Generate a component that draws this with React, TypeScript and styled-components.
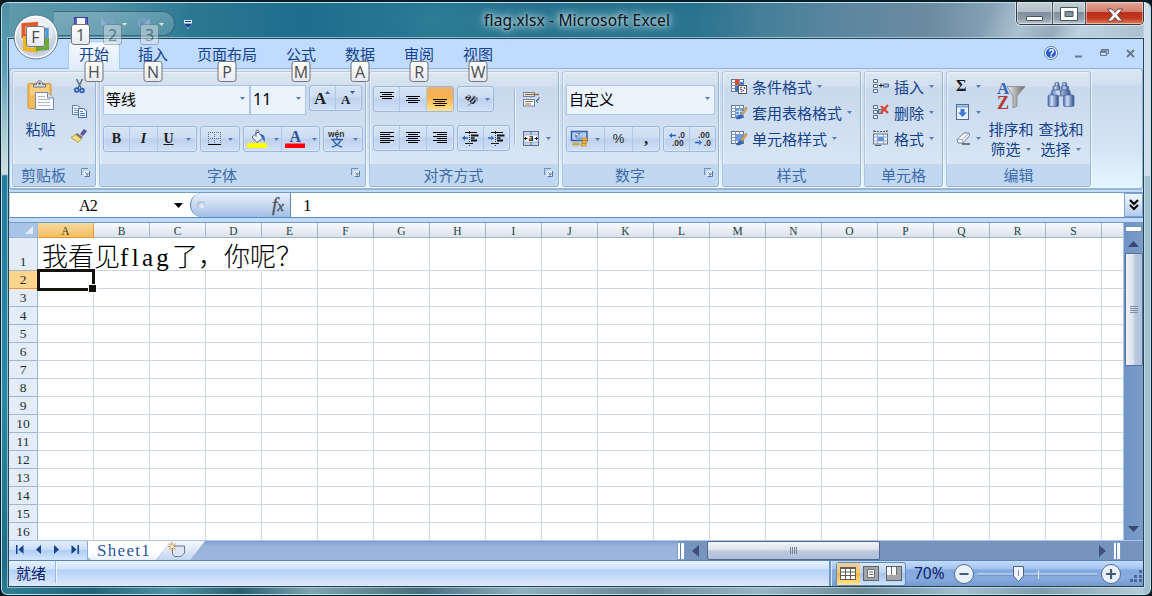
import React from "react";
import styled, { createGlobalStyle, css } from "styled-components";

const Global = createGlobalStyle`
  * { box-sizing: border-box; }
  html, body { margin: 0; padding: 0; overflow: hidden; background: #07191f; }
  body { font-family: "Noto Sans CJK SC", sans-serif; font-size: 15px; color: #15428b; }
  svg { display: block; flex: none; overflow: visible; }
`;

const Window = styled.div`
  width: 1152px;
  height: 596px;
  position: relative;
  display: flex;
  flex-direction: column;
  border-radius: 8px 8px 7px 7px;
  overflow: hidden;
  border: 1px solid #0c1d25;
  border-top-width: 2px;
  padding: 0 7px 8px 7px;
  box-shadow: inset 0 0 0 1px #b5e2ee;
  background:
    linear-gradient(90deg, transparent 1142px, rgba(212, 226, 235, 0.9) 1143px) 0 0 / 100% 174px no-repeat,
    linear-gradient(90deg, transparent 1142px, #a3c0d0 1143px) 0 0 / 100% 100% no-repeat,
    linear-gradient(180deg, #4c8fa4 0, #5f9fba 70px, #a9c9d0 130px, #d3dedf 172px, #257c9c 174px, #2b87a3 400px, #1f6d86 560px, #2d7d92 596px) 0 0 / 8px 100% no-repeat,
    linear-gradient(90deg, #2f7f95 0, #1f6379 90px, #4f94a6 170px, #2b5f70 240px, #7fa5b0 310px, #476d7c 420px, #8fb0c0 520px, #6c8695 640px, #9ab6c4 760px, #6b8895 860px, #a5bfcf 960px, #809cab 1040px, #b5cbd9 1140px) 0 100% / 100% 9px no-repeat,
    linear-gradient(115deg, transparent 900px, rgba(183, 205, 219, 0.65) 935px, rgba(120, 145, 160, 0.3) 965px, rgba(197, 219, 234, 0.7) 990px, rgba(160, 180, 195, 0.5) 1040px),
    radial-gradient(ellipse 180px 30px at 560px 20px, rgba(80, 150, 170, 0.4), transparent),
    linear-gradient(90deg, #5f9aab 0, #4f91a6 100px, #2c7893 190px, #1e6d8d 300px, #287995 430px, #1c6787 540px, #25708d 690px, #457f98 760px, #5b86a0 840px, #6c8ba1 930px, #8fa9bc 1010px, #b4c7d5 1100px, #c3d3dd 1152px);
`;

const TitleBar = styled.header`
  height: 36px;
  flex: none;
  position: relative;
  display: flex;
  justify-content: space-between;
  align-items: flex-start;
`;

const QuickAccess = styled.div`
  position: absolute;
  left: 46px;
  top: 9px;
  width: 121px;
  height: 25px;
  border: 1px solid rgba(45, 85, 100, 0.75);
  border-left: none;
  border-radius: 0 13px 13px 0;
  background: linear-gradient(rgba(255, 255, 255, 0.22), rgba(255, 255, 255, 0.14));
`;

const QuickIcon = styled.div<{ $x: number; $y: number; $dim?: boolean }>`
  position: absolute;
  left: ${(p) => p.$x}px;
  top: ${(p) => p.$y}px;
  opacity: ${(p) => (p.$dim ? 0.85 : 1)};
`;

const tip = css`
  display: flex;
  align-items: center;
  justify-content: center;
  height: 21px;
  min-width: 19px;
  border: 1px solid #767676;
  border-radius: 3px;
  background: linear-gradient(#ffffff, #e6e9f2);
  color: #4c4c4c;
  font: 16px/18px "Open Sans", sans-serif;
  z-index: 5;
`;

const FloatingTip = styled.span<{ $x: number; $y: number; $faded?: boolean }>`
  ${tip}
  position: absolute;
  left: ${(p) => p.$x}px;
  top: ${(p) => p.$y}px;
  ${(p) => p.$faded && css`opacity: 0.5; background: #d9e5ea;`}
`;

const Title = styled.h1`
  position: absolute;
  left: 476px;
  top: 7px;
  margin: 0;
  font: 400 15.5px/22px "Noto Sans", sans-serif;
  letter-spacing: 0.15px;
  white-space: nowrap;
  color: #0b1418;
  text-shadow: 0 0 5px rgba(225, 245, 250, 0.9), 0 0 9px rgba(215, 240, 247, 0.8), 0 0 13px rgba(200, 230, 240, 0.7);
`;

const WindowButtons = styled.div`
  display: flex;
  margin-left: auto;
  height: 23px;
  border: 1px solid #303a42;
  border-top: none;
  border-radius: 0 0 5px 5px;
  overflow: hidden;
  box-shadow: 0 0 0 1px rgba(255, 255, 255, 0.55);
`;

const WindowButton = styled.div<{ $w: number; $close?: boolean; $drop?: number }>`
  width: ${(p) => p.$w}px;
  display: flex;
  align-items: center;
  justify-content: center;
  padding-top: ${(p) => p.$drop ?? 1}px;
  box-shadow: inset 0 0 0 1px rgba(255, 255, 255, 0.45);
  border-left: ${(p) => (p.$w === 35 ? "none" : "1px solid #46525c")};
  background: ${(p) =>
    p.$close
      ? "linear-gradient(#e3a795 0, #d27e6c 45%, #b72d17 48%, #c43a20 75%, #e08060)"
      : "linear-gradient(#c6cfd8 0, #b3bec8 45%, #7f8d9b 48%, #8e9daa 75%, #b9c7d2)"};
`;

const Client = styled.main`
  flex: 1;
  min-height: 0;
  display: flex;
  flex-direction: column;
  border: 1px solid #26444f;
  box-shadow: 0 0 0 1px rgba(200, 235, 245, 0.6);
  background: #bfdbff;
`;

const Tabs = styled.nav`
  height: 29px;
  flex: none;
  display: flex;
  padding: 2px 0 0 59px;
  gap: 7px;
  position: relative;
`;

const Tab = styled.div<{ $active?: boolean }>`
  position: relative;
  padding: 0 11px;
  height: 28px;
  line-height: 25px;
  color: #15428b;
  white-space: nowrap;
  ${(p) =>
    p.$active &&
    css`
      z-index: 2;
      border: 1px solid #a9cdf0;
      border-bottom: none;
      padding: 0 10px;
      line-height: 23px;
      border-radius: 4px 4px 0 0;
      background: linear-gradient(#f5faff, #e1ebf8);
      box-shadow: inset 0 0 2px 1px #d8f4ff;
    `}
`;

const TabTip = styled.span<{ $inset?: boolean }>`
  ${tip}
  position: absolute;
  left: 50%;
  top: ${(p) => (p.$inset ? 19 : 20)}px;
  transform: translateX(-50%);
`;

const DocButtons = styled.div`
  position: absolute;
  right: 8px;
  top: 7px;
  display: flex;
  align-items: center;
  gap: 17px;
`;

const Ribbon = styled.section`
  height: 122px;
  flex: none;
  display: flex;
  gap: 3px;
  padding: 2px 2px;
  border: 1px solid #8db2e3;
  border-bottom: 2px solid #9ab6cf;
  border-radius: 4px;
  background: linear-gradient(#dde7f4 0, #d1dff0 15px, #c7d8ed 17px, #d5e4f3 80px, #e4f6ff 118px);
`;

const Group = styled.div<{ $w: number }>`
  width: ${(p) => p.$w}px;
  height: 116px;
  flex: none;
  border: 1px solid;
  border-color: #b9cbdf #96b7d3 #8fb3cf #b0c6dd;
  border-radius: 3px;
  display: flex;
  flex-direction: column;
  box-shadow: inset 1px 1px 0 rgba(255, 255, 255, 0.45), 1px 1px 0 rgba(255, 255, 255, 0.6);
  background: linear-gradient(#dde7f3 0, #d3dfee 14px, #c8d8ed 16px, #d8e6f4 92px);
`;

const GroupBody = styled.div<{ $pad: string; $gap?: number; $row?: boolean }>`
  height: 92px;
  padding: ${(p) => p.$pad};
  display: flex;
  flex-direction: ${(p) => (p.$row ? "row" : "column")};
  gap: ${(p) => p.$gap ?? 0}px;
`;

const GroupLabel = styled.div<{ $launch?: boolean }>`
  flex: 1;
  display: flex;
  align-items: center;
  justify-content: center;
  position: relative;
  line-height: 20px;
  color: #3e6aaa;
  padding-right: ${(p) => (p.$launch ? 21 : 0)}px;
  background: linear-gradient(#c1d8f0, #c0d8ef);
  border-radius: 0 0 2px 2px;
  white-space: nowrap;
`;

const LauncherSlot = styled.span`
  position: absolute;
  right: 5px;
  top: 4px;
`;

const Line = styled.div<{ $h?: number; $gap?: number }>`
  display: flex;
  align-items: flex-start;
  height: ${(p) => p.$h ?? 26}px;
  gap: ${(p) => p.$gap ?? 3}px;
`;

const Combo = styled.div<{ $w: number }>`
  width: ${(p) => p.$w}px;
  height: 30px;
  border: 1px solid #aec6e6;
  background: #eaf2fb;
  color: #000;
  padding: 0 4px 3px 2px;
  display: flex;
  align-items: center;
  justify-content: space-between;
  line-height: 24px;
`;

const Latin = styled.span`
  font: 16px/24px "Noto Sans", sans-serif;
`;

const ButtonSet = styled.div`
  display: flex;
  height: 26px;
  border: 1px solid #9ab8df;
  border-radius: 3px;
  background: linear-gradient(#d6e4f5 0, #ccdcf2 45%, #bed1ed 50%, #cfe0f6 100%);
  box-shadow: inset 0 0 0 1px rgba(255, 255, 255, 0.25);
`;

const ToolButton = styled.div<{ $w: number; $on?: boolean; $sep?: boolean }>`
  width: ${(p) => p.$w}px;
  height: 24px;
  display: flex;
  align-items: center;
  justify-content: center;
  gap: 7px;
  border-right: ${(p) => (p.$sep ? "1px solid #b0c8e8" : "none")};
  ${(p) => p.$on && css`background: linear-gradient(#edb16e 0, #fdb14d 40%, #ffb94e 50%, #ffe596 100%); border-radius: 2px;`}
`;

const Glyph = styled.span<{ $italic?: boolean; $under?: boolean; $size?: number }>`
  font: ${(p) => (p.$italic ? "italic " : "")}700 ${(p) => p.$size ?? 14}px/20px "Liberation Serif", serif;
  text-decoration: ${(p) => (p.$under ? "underline" : "none")};
  color: #1c1c1c;
`;

const Percent = styled.span`
  font: 400 13px/20px "Liberation Sans", sans-serif;
  color: #222;
`;

const VLine = styled.i<{ $h: number }>`
  width: 2px;
  height: ${(p) => p.$h}px;
  border-left: 1px solid #9ab8df;
  border-right: 1px solid #eef5fd;
`;

const AlignSide = styled.div`
  display: flex;
  flex-direction: column;
  gap: 24px;
  padding: 6px 0 0 7px;
`;

const SideRule = styled.div`
  padding: 3px 0 0 4px;
`;

const Columns = styled.div`
  display: flex;
`;

const Stack = styled.div<{ $gap: number }>`
  display: flex;
  flex-direction: column;
  gap: ${(p) => p.$gap}px;
`;

const SizeButtons = styled.div`
  margin-left: 3px;
`;

const WithArrow = styled.div<{ $gap?: number }>`
  display: flex;
  align-items: center;
  gap: ${(p) => p.$gap ?? 6}px;
`;

const MenuItem = styled.div`
  height: 26px;
  display: flex;
  align-items: center;
  gap: 5px;
  white-space: nowrap;
`;

const BigButton = styled.div<{ $w: number; $top: number }>`
  width: ${(p) => p.$w}px;
  padding-top: ${(p) => p.$top}px;
  display: flex;
  flex-direction: column;
  align-items: center;
  line-height: 20px;
  white-space: nowrap;
`;

const BigLabel = styled.div<{ $top: number }>`
  margin-top: ${(p) => p.$top}px;
  display: flex;
  flex-direction: column;
  align-items: center;
`;

const SmallIcons = styled.div<{ $pad: string; $gap: number }>`
  padding: ${(p) => p.$pad};
  display: flex;
  flex-direction: column;
  align-items: center;
  gap: ${(p) => p.$gap}px;
`;

const FormulaBar = styled.div`
  margin-top: 2px;
  height: 26px;
  flex: none;
  display: flex;
  border-top: 1px solid #6f9cc5;
  border-bottom: 1px solid #5f8dbb;
  border-left: 1px solid #b6cce8;
  background: #fff;
  font: 16px/25px "Liberation Serif", serif;
  color: #000;
`;

const NameBox = styled.div`
  width: 180px;
  padding: 0 7px 0 69px;
  display: flex;
  align-items: center;
  justify-content: space-between;
  font-size: 16px;
  letter-spacing: -0.8px;
`;

const FxPill = styled.div`
  width: 101px;
  display: flex;
  align-items: center;
  justify-content: space-between;
  padding: 0 6px 0 6px;
  border-left: 1px solid #5b87bb;
  border-right: 1px solid #5b87bb;
  border-radius: 12px 0 0 12px;
  background: linear-gradient(#e8f0fb 0, #c7d9f0 50%, #a2bee6 100%);
`;

const Knob = styled.i`
  width: 8px;
  height: 8px;
  border-radius: 50%;
  background: radial-gradient(circle at 60% 65%, #eef4fc, #93a9c9);
`;

const Fx = styled.span`
  font: italic 400 19px/22px "Liberation Serif", serif;
  color: #4d5561;
  -webkit-text-stroke: 0.4px #4d5561;
  small { font-size: 15px; }
`;

const FormulaInput = styled.div`
  flex: 1;
  padding-left: 12px;
  font-size: 17px;
`;

const Expand = styled.div`
  width: 19px;
  border: 1px solid #7ea3d0;
  background: linear-gradient(#f1f6fd, #b4cbec);
  display: flex;
  align-items: center;
  justify-content: center;
`;

const Sheet = styled.div`
  margin-top: 4px;
  height: 318px;
  flex: none;
  display: flex;
  border-top: 1px solid #7798bf;
`;

const Grid = styled.div`
  width: 1114px;
  overflow: hidden;
  position: relative;
  background: #fff;
`;

const GridRow = styled.div<{ $h: number }>`
  display: flex;
  height: ${(p) => p.$h}px;
`;

const ColHead = styled.div<{ $on?: boolean }>`
  width: 56px;
  flex: none;
  border-right: 1px solid #9eb6ce;
  border-bottom: 1px solid #9eb6ce;
  background: linear-gradient(#f8fafd, #dbe2ec);
  color: #223d3d;
  font: 11.5px/16px "Liberation Serif", serif;
  text-align: center;
  ${(p) => p.$on && css`background: linear-gradient(#f9d99f, #f0bf62); border-color: #f29536; color: #3c3520;`}
`;

const Corner = styled.div`
  width: 29px;
  flex: none;
  border-right: 1px solid #9eb6ce;
  border-bottom: 1px solid #9eb6ce;
  background: #a9c4e9;
  display: flex;
  align-items: flex-end;
  justify-content: flex-end;
  padding: 0 4px 3px 0;
`;

const RowHead = styled.div<{ $on?: boolean }>`
  width: 29px;
  flex: none;
  border-right: 1px solid #9eb6ce;
  border-bottom: 1px solid #9eb6ce;
  background: #e4ecf7;
  display: flex;
  align-items: flex-end;
  justify-content: center;
  color: #1c2f33;
  font: 13.5px/16px "Liberation Serif", serif;
  ${(p) => p.$on && css`background: #ffd58d; border-color: #f29536;`}
`;

const Cell = styled.div`
  width: 56px;
  flex: none;
  border-right: 1px solid #d0d7e5;
  border-bottom: 1px solid #d0d7e5;
  white-space: nowrap;
`;

const WideCell = styled.div`
  width: 280px;
  flex: none;
  border-right: 1px solid #d0d7e5;
  border-bottom: 1px solid #d0d7e5;
  padding-left: 4px;
  color: #000;
  font: 300 26px/34px "Noto Sans CJK SC", sans-serif;
  white-space: nowrap;
`;

const SerifRun = styled.span`
  font-family: "Liberation Serif", serif;
  font-size: 25px;
  letter-spacing: 3.3px;
`;

const Selection = styled.div`
  position: absolute;
  left: 28px;
  top: 46px;
  width: 58px;
  height: 22px;
  border: 3px solid #15110d;
  &::after {
    content: "";
    position: absolute;
    right: -5px;
    bottom: -5px;
    width: 7px;
    height: 7px;
    background: #15110d;
    border: 1px solid #fff;
  }
`;

const VScroll = styled.div`
  flex: 1;
  display: flex;
  flex-direction: column;
  align-items: center;
  border-left: 1px solid #a9c5ee;
  background: linear-gradient(90deg, #6f93c4, #7c9bc7);
`;

const SplitHandle = styled.div`
  width: 17px;
  height: 6px;
  margin-top: 3px;
  background: #fff;
  border: 1px solid #6d8fb8;
`;

const ScrollArrow = styled.div<{ $top: number }>`
  margin-top: ${(p) => p.$top}px;
`;

const VThumb = styled.div`
  width: 18px;
  height: 113px;
  margin-top: 6px;
  border: 1px solid #55709a;
  border-radius: 1px;
  background: linear-gradient(90deg, #f1f4f9, #dbe2ec 45%, #bccadd 55%, #adc0da);
  display: flex;
  align-items: center;
  justify-content: center;
`;

const SheetBar = styled.div`
  height: 20px;
  flex: none;
  display: flex;
  background: linear-gradient(#7f9fcf, #9bb4dc 30%, #9db6dd);
  border-top: 1px solid #a9c5ee;
`;

const SheetNav = styled.div`
  width: 79px;
  display: flex;
  align-items: center;
  justify-content: space-between;
  padding: 0 8px 2px 7px;
  background: linear-gradient(#e3eefc 0, #c9defa 45%, #afcdf5 50%, #d2e5fd);
  border-right: 1px solid #8badd8;
`;

const SheetTab = styled.div`
  width: 83px;
  padding-left: 9px;
  background: linear-gradient(#ffffff 60%, #e8eefc);
  clip-path: polygon(0 0, 100% 0, 68px 100%, 3px 100%, 0 85%);
  color: #2a569d;
  font: 17px/20px "Liberation Serif", serif;
  letter-spacing: 1.3px;
`;

const NewSheet = styled.div`
  width: 48px;
  margin-left: -14px;
  background: linear-gradient(#f4f8fe, #c4d6ef);
  clip-path: polygon(14px 0, 100% 0, 33px 100%, 0 100%);
  padding: 1px 0 0 11px;
`;

const HScroll = styled.div`
  margin-left: auto;
  width: 466px;
  display: flex;
  align-items: center;
  background: #7794be;
`;

const SplitBox = styled.div`
  width: 8px;
  height: 18px;
  background: linear-gradient(90deg, #ffffff 2px, #5b82b5 2px, #5b82b5 3px, #ffffff 3px);
  border: 1px solid #7a9cc8;
`;

const ArrowGap = styled.div`
  margin-left: 7px;
`;

const HThumb = styled.div`
  width: 173px;
  height: 19px;
  margin: 0 219px 0 8px;
  border: 1px solid #4f6990;
  border-radius: 2px;
  background: linear-gradient(#f2f4f8, #dde3ec 45%, #bccadd 52%, #acc0db);
  display: flex;
  align-items: center;
  justify-content: center;
`;

const StatusBar = styled.footer`
  flex: 1;
  display: flex;
  border-top: 1px solid #5b82b5;
  background: linear-gradient(#e6f1fe 0, #cfe2fc 32%, #b3d0f7 36%, #c4daf9 60%, #dde9fb 100%);
`;

const StatusText = styled.div`
  width: 46px;
  padding-left: 7px;
  line-height: 23px;
  color: #10246b;
  white-space: nowrap;
`;

const StatusRight = styled.div`
  margin-left: auto;
  width: 314px;
  display: flex;
  align-items: center;
  border-left: 2px solid #6f97cf;
  box-shadow: inset 1px 0 0 #d9e9ff;
  background: linear-gradient(#c5dcfa 0, #a5c5f0 30%, #84aae0 36%, #87abdf 70%, #7499cd 100%);
  padding-left: 5px;
`;

const Views = styled.div`
  width: 70px;
  height: 24px;
  display: flex;
  border: 1px solid #6189c2;
  border-radius: 3px;
  background: linear-gradient(#dae8fb, #b9d2f3 45%, #a2c1ec 50%, #cfe3fc);
`;

const View = styled.div<{ $on?: boolean }>`
  flex: 1;
  display: flex;
  align-items: center;
  justify-content: center;
  ${(p) => p.$on && css`background: linear-gradient(#f1d0a0, #f5c56e 45%, #f8b73c 50%, #ffe596);`}
`;

const Zoom = styled.span`
  width: 41px;
  padding: 0 0 2px 8px;
  color: #10246b;
  font: 15.5px/20px "Noto Sans", sans-serif;
`;

const Arrow = ({ c = "#5580b8" }: { c?: string }) => (
  <svg width="5" height="3" viewBox="0 0 5 3"><path d="M0 0H5L2.5 3Z" fill={c} /></svg>
);

const Launcher = () => (
  <LauncherSlot>
    <svg width="9" height="9" viewBox="0 0 9 9">
      <path d="M.5 7V.5H7" fill="none" stroke="#6b8db5" />
      <path d="M3 3h6v6H3z" fill="#fff" />
      <path d="M8.500 3V8.500H3.500M4 4L7 7M7 4.500V7H4.500" fill="none" stroke="#4f7aa8" />
    </svg>
  </LauncherSlot>
);

const OfficeOrb = () => (
  <svg width="46" height="46" viewBox="0 0 46 46">
    <defs>
      <radialGradient id="orb" cx=".5" cy=".35" r=".65">
        <stop offset="0" stopColor="#fff" /><stop offset=".55" stopColor="#e4e9f1" />
        <stop offset=".8" stopColor="#b9c5d6" /><stop offset="1" stopColor="#f5f8fc" />
      </radialGradient>
    </defs>
    <circle cx="23" cy="23" r="22" fill="url(#orb)" stroke="#5d7a90" />
    <circle cx="23" cy="23" r="20.5" fill="none" stroke="#fff" strokeWidth="1.5" />
    <path d="M2.500 22C12 28 34 28 43.500 22C43 35 34 43 23 43S3 35 2.500 22" fill="#c5d3e5" opacity=".65" />
    <path d="M10.500 11L23 10V22H10.500Z" fill="none" stroke="#df5a27" strokeWidth="4" />
    <path d="M25 15.500H34V24H25Z" fill="none" stroke="#4f9bd8" strokeWidth="3.500" />
    <path d="M12 24H23V36.500L12 35Z" fill="none" stroke="#f3b31c" strokeWidth="4" />
    <path d="M25 26H34V34L25 35Z" fill="none" stroke="#6aa83a" strokeWidth="4" />
  </svg>
);

const Undo = ({ flip }: { flip?: boolean }) => (
  <svg width="14" height="12" viewBox="0 0 14 12">
    <g transform={flip ? "translate(14 0) scale(-1 1)" : undefined}>
      <path d="M3 6C4 2 9 1 11 4.500S10 10 8 11" fill="none" stroke="#7fa0cd" strokeWidth="2.500" />
      <path d="M0 1V8H7Z" fill="#8fb0da" />
    </g>
  </svg>
);

const PasteIcon = () => (
  <svg width="28" height="31" viewBox="0 0 28 31">
    <rect x="1" y="3.500" width="23" height="25" rx="1.500" fill="#f0bb5b" stroke="#cf9338" />
    <path d="M3 5H22V15H3Z" fill="#f7cd80" />
    <path d="M6.500 7V4.500H9.500C9.500-.5 15.500-.5 15.500 4.500H18.500V7Z" fill="#dce0e6" stroke="#6c7580" />
    <circle cx="12.500" cy="3.500" r="1.300" fill="#5a6470" />
    <path d="M8.500 12.500H20.500L26.500 18V29.500H8.500Z" fill="#fafcff" stroke="#7489a8" />
    <path d="M20.500 12.500V18H26.500" fill="#d4dfef" stroke="#7489a8" />
    <path d="M11 16.500h7M11 19.500h12M11 22.500h12M11 25.500h12" stroke="#aab8cc" />
  </svg>
);
const Cut = () => (
  <svg width="11" height="15" viewBox="0 0 11 15">
    <path d="M2.500 0L7 9M8.500 0L4 9" stroke="#5e6f88" strokeWidth="1.600" />
    <circle cx="2.800" cy="11" r="1.900" fill="none" stroke="#2f5cb8" strokeWidth="1.700" />
    <circle cx="8" cy="11.500" r="1.900" fill="none" stroke="#2f5cb8" strokeWidth="1.700" />
  </svg>
);
const Copy = () => (
  <svg width="15" height="13" viewBox="0 0 15 13">
    <path d="M.5.500H5.500L8.500 3V9.500H.5Z" fill="#f7faff" stroke="#5a7ab5" />
    <path d="M2 3.500h3M2 5.500h4M2 7.500h4" stroke="#6f92cc" />
    <path d="M6.500 3.500H11.500L14.500 6V12.500H6.500Z" fill="#f7faff" stroke="#3f63a8" />
    <path d="M8 6.500h3M8 8.500h5M8 10.500h5" stroke="#5278bd" />
  </svg>
);
const Brush = () => (
  <svg width="16" height="14" viewBox="0 0 16 14">
    <path d="M9 5L13 0L16 2L12 7Z" fill="#5a4f9e" />
    <path d="M6 4L12 8L10 10L4 6Z" fill="#77777f" />
    <path d="M4.500 5.500L10.500 10L7 13.500L0 8.500Z" fill="#f4dc7a" stroke="#a88f3c" strokeWidth=".8" />
  </svg>
);
const SizeA = ({ up }: { up?: boolean }) => (
  <svg width="17" height="16" viewBox="0 0 17 16">
    <text x={up ? 0 : 1} y={14} fontFamily="Liberation Serif, serif" fontWeight="700" fontSize={up ? 17 : 13} fill="#222">A</text>
    <path d={up ? "M11 4L13.500 1L16 4Z" : "M10 1H15L12.500 4Z"} fill="#2f5ba8" />
  </svg>
);
const Lines = ({ kind, dy = 0 }: { kind: "l" | "c" | "r" | "v"; dy?: number }) => {
  const long = [0, 14];
  const short = kind === "l" ? [0, 10] : kind === "r" ? [4, 14] : [2, 12];
  const n = kind === "v" ? 4 : 6;
  const top = kind === "v" ? 4 + dy : 1;
  return (
    <svg width="14" height="14" viewBox="0 0 14 14">
      {Array.from({ length: n }, (_, i) => {
        const [a, b] = i % 2 ? short : long;
        return <rect key={i} x={a} y={top + i * 2} width={b - a} height="1" fill="#000" />;
      })}
    </svg>
  );
};
const Borders = () => (
  <svg width="13" height="14" viewBox="0 0 13 14">
    <path d="M.5 0V12M6.500 0V12M12.500 0V12M0 .5H13M0 6.500H13" stroke="#5d7290" strokeDasharray="1 1" />
    <path d="M0 12.500H13" stroke="#000" />
  </svg>
);
const Fill = () => (
  <svg width="20" height="18" viewBox="0 0 20 18">
    <path d="M5 7L11 2L16 8L10 12.500Z" fill="#f3f7fd" stroke="#4c6285" />
    <path d="M9 7V1.500C9-.5 12-.5 12 2" fill="none" stroke="#4c6285" />
    <path d="M13 4C18 4 18.500 9 17.500 12L15 8Z" fill="#3a6cb8" />
    <rect x="0" y="13" width="20" height="5" rx="1" fill="#ff0" />
  </svg>
);
const FontColor = () => (
  <svg width="20" height="18" viewBox="0 0 20 18">
    <text x="4.500" y="12" fontFamily="Liberation Serif, serif" fontWeight="700" fontSize="16" fill="#2d5596">A</text>
    <rect x="0" y="13.500" width="20" height="4.500" fill="#f00" />
  </svg>
);
const Wen = () => (
  <svg width="18" height="18" viewBox="0 0 18 18">
    <text x="0" y="7" fontFamily="Liberation Sans, sans-serif" fontWeight="700" fontSize="8.500" fill="#333">wén</text>
    <path d="M9 6.500V9M3 9.500H15M5 10C7 14 10 16 14 17M13 10C11 14 8 16 4 17" fill="none" stroke="#2c5cb0" strokeWidth="1.400" />
  </svg>
);
const Orient = () => (
  <svg width="16" height="15" viewBox="0 0 16 15">
    <text x="1" y="8" transform="rotate(40 5 9)" fontFamily="Liberation Serif, serif" fontWeight="700" fontSize="11" fill="#222">ab</text>
    <path d="M6 14L15 6M15 5.500V9.500M15.500 6H11.500" fill="none" stroke="#60718c" />
  </svg>
);
const Indent = ({ inward }: { inward?: boolean }) => (
  <svg width="17" height="15" viewBox="0 0 17 15">
    <path d="M3 1.500H15M3 12.500H11" stroke="#111" />
    <path d="M9 4.500H16.500M9 9.500H15" stroke="#111" strokeWidth="2" />
    <path d="M9 7H12.500" stroke="#111" strokeWidth="1.500" />
    <path d="M7.500 0V15" stroke="#333" strokeDasharray="1 1" />
    <path d={inward ? "M6 7L3 4.500V9.500ZM0 6.300H3.500V7.700H0Z" : "M0 7L3 4.500V9.500ZM3 6.300H6V7.700H3Z"} fill="#2a5fc0" />
  </svg>
);
const Wrap = () => (
  <svg width="17" height="15" viewBox="0 0 17 15">
    <rect x=".5" y=".5" width="11" height="4" fill="#fff" stroke="#6e809b" />
    <path d="M2 2.500H16" stroke="#9a6840" strokeWidth="1.300" />
    <rect x=".5" y="7.500" width="11" height="6.500" fill="#fff" stroke="#6e809b" />
    <path d="M2 9.500H10M2 12H8" stroke="#9a6840" strokeWidth="1.200" />
    <path d="M16 5C16 8 15 9 13 9M15 7L13 9L15 11" fill="none" stroke="#44689c" />
  </svg>
);
const Merge = () => (
  <svg width="16" height="15" viewBox="0 0 16 15">
    <rect x=".5" y=".5" width="15" height="14" fill="#c5d4ea" stroke="#586f94" />
    <path d="M8 0V4M8 11V15" stroke="#586f94" />
    <rect x="1" y="4" width="14" height="7" fill="#fff" stroke="#7d8fac" strokeWidth=".6" />
    <text x="5.500" y="10" fontFamily="Liberation Serif, serif" fontWeight="700" fontSize="10" fill="#111">a</text>
    <path d="M1 7.500H4.500M11.500 7.500H15M2.500 6V9M13.500 6V9" stroke="#111" />
  </svg>
);
const Money = () => (
  <svg width="17" height="16" viewBox="0 0 17 16">
    <rect x=".5" y=".5" width="15.500" height="9" fill="#b9cdee" stroke="#2f5cab" strokeWidth="1.500" />
    <ellipse cx="8" cy="5" rx="4" ry="3" fill="#5f86c8" />
    <path d="M5 3.500H7V7M9 7V3.500H11V7" fill="none" stroke="#e8f0fc" />
    <path d="M11 7h5v2.500h-5zM11 9.700h5v2.300h-5zM10 12.500h5v2.500h-5zM2 12h6v2H2z" fill="#f2c049" stroke="#a8761c" strokeWidth=".6" />
  </svg>
);
const Decimals = ({ less }: { less?: boolean }) => (
  <svg width="16" height="14" viewBox="0 0 16 14">
    <text x={less ? 3 : 9} y="6" fontFamily="Liberation Sans, sans-serif" fontWeight="700" fontSize="8.500" fill="#333">{less ? ".00" : ".0"}</text>
    <text x={less ? 9 : 3} y="14" fontFamily="Liberation Sans, sans-serif" fontWeight="700" fontSize="8.500" fill="#333">{less ? ".0" : ".00"}</text>
    <path d={less ? "M7 10.500L4 8V13ZM0 9.800H4.500V11.200H0Z" : "M0 3.500L3 1V6ZM3 2.800H7V4.200H3Z"} fill="#2a5fc0" />
  </svg>
);
const TableIcon = ({ kind }: { kind: "cond" | "fmt" | "cell" }) => (
  <svg width="16" height="16" viewBox="0 0 16 16">
    <rect x=".5" y="1.500" width="12" height="12" fill="#fff" stroke="#5f77a0" />
    <path d="M0 4.500H13M0 7.500H13M0 10.500H13M4.500 1V14M8.500 1V14" stroke="#7f96ba" />
    {kind === "cond" && (
      <>
        <path d="M4 1h4v6H4z" fill="#dc4a35" /><path d="M4 8h4v5H4z" fill="#3f6fc4" /><path d="M9 4h4v3H9z" fill="#4c7bd0" />
        <rect x="7.500" y="7.500" width="8" height="8" fill="#fff" stroke="#555" />
        <path d="M9 10L11 9M9 12L11 11M13 9L14 11M10 14L13 12" stroke="#333" />
      </>
    )}
    {kind !== "cond" && (
      <>
        <path d={kind === "fmt" ? "M5 5h8v8H5z" : "M4 5h9v5H4z"} fill="#6b9be6" />
        {kind === "fmt" && <path d="M5 7.500H13M5 10.500H13M8.500 5V13" stroke="#cfe0fa" />}
        <path d="M15 3L16 5L11.500 11L9.500 10Z" fill="#e0a848" stroke="#8c6a30" strokeWidth=".5" />
        <path d="M5 15C6 11 10 9 12 11.500C12 14.500 9 16 5 15Z" fill="#3565b5" />
      </>
    )}
  </svg>
);
const CellsIcon = ({ kind }: { kind: "ins" | "del" | "fmt" }) =>
  kind === "fmt" ? (
    <svg width="16" height="16" viewBox="0 0 16 16">
      <path d="M1 0V3M14 0V3M1 1.500H14" stroke="#44566f" strokeDasharray="2 1" />
      <rect x=".5" y="4" width="14" height="10" fill="#f5f8fd" stroke="#58708f" />
      <path d="M0 7H15M0 11H15M4.500 4V14M10.500 4V14" stroke="#8fa3c2" />
      <rect x="5" y="7" width="5.500" height="4" fill="#5e92e2" />
      <path d="M2 15.500H8" stroke="#44566f" />
    </svg>
  ) : (
    <svg width="16" height="15" viewBox="0 0 16 15">
      <path d="M.5.500h4v3h-4zM.5 5.500h4v3h-4zM.5 10.500h4v3h-4z" fill="#f5f8fd" stroke="#58708f" />
      {kind === "ins" ? (
        <>
          <path d="M10.500 5h5v3h-5z" fill="#9fc0ee" stroke="#4c6a98" />
          <path d="M6 6.500H10M8 4.500V8.500" stroke="#111" />
        </>
      ) : (
        <>
          <path d="M5.500 4.500h4v4h-4z" fill="#9fc0ee" stroke="#4c6a98" />
          <path d="M8 1L15 8M15 0L8 8" stroke="#e0432b" strokeWidth="2.200" />
        </>
      )}
    </svg>
  );
const FillDown = () => (
  <svg width="14" height="16" viewBox="0 0 14 16">
    <rect x=".5" y=".5" width="12" height="15" fill="#eaf2fe" stroke="#4b6a9e" />
    <path d="M1 2.500H12" stroke="#7ea2dc" strokeWidth="2" />
    <path d="M4.500 5H8.500V8.500H11L6.500 13L2 8.500H4.500Z" fill="#3f78dd" />
  </svg>
);
const Eraser = () => (
  <svg width="15" height="20" viewBox="0 -3.500 15 20">
    <path d="M1 8L8 1.500H13L13.500 4L7 11.500H2Z" fill="#fdfdff" stroke="#6f7f99" />
    <path d="M1 8H6L13 2M6 8L7 11" fill="none" stroke="#9aa8be" />
    <path d="M6 12.500H14" stroke="#111" />
  </svg>
);
const SortIcon = () => (
  <svg width="30" height="30" viewBox="0 0 30 30">
    <defs><linearGradient id="fun" x1="0" x2="1"><stop offset="0" stopColor="#eee" /><stop offset="1" stopColor="#666" /></linearGradient></defs>
    <text x="1" y="13" fontFamily="Liberation Serif, serif" fontWeight="700" fontSize="17" fill="#3564b4">A</text>
    <text x="1" y="28" fontFamily="Liberation Serif, serif" fontWeight="700" fontSize="18" fill="#b03a3a">Z</text>
    <path d="M11 5.500H29L21 15V25L17 27V15Z" fill="url(#fun)" stroke="#858585" strokeWidth=".8" />
  </svg>
);
const Binoculars = () => (
  <svg width="28" height="26" viewBox="0 0 28 26">
    <defs><linearGradient id="bin" x1="0" x2="1"><stop offset="0" stopColor="#4467a8" /><stop offset=".35" stopColor="#d3e1f7" /><stop offset="1" stopColor="#2d4c8c" /></linearGradient></defs>
    <g fill="url(#bin)" stroke="#48649b" strokeWidth=".7">
      <rect x="8" y=".5" width="4" height="4" rx="1" /><rect x="15.500" y=".5" width="4" height="4" rx="1" />
      <rect x="6" y="4" width="7" height="4" rx="1" /><rect x="14.500" y="4" width="7" height="4" rx="1" />
      <path d="M5 8H13.500V14H3.500ZM14 8H22.500L24 14H14Z" />
      <rect x="1" y="13" width="10.500" height="11.500" rx="1.500" /><rect x="16.500" y="13" width="10.500" height="11.500" rx="1.500" />
    </g>
  </svg>
);

const VGrip = () => (
  <svg width="8" height="8" viewBox="0 0 8 8"><path d="M0 .5H8M0 2.500H8M0 4.500H8M0 6.500H8" stroke="#8290a5" /></svg>
);

const tabs: [string, string][] = [["开始", "H"], ["插入", "N"], ["页面布局", "P"], ["公式", "M"], ["数据", "A"], ["审阅", "R"], ["视图", "W"]];
const cols = "ABCDEFGHIJKLMNOPQRS".split("");

export default function App() {
  return (
    <>
      <Global />
      <Window>
        <TitleBar>
          <QuickAccess />
          <QuickIcon $x={66} $y={15}>
            <svg width="14" height="12" viewBox="0 0 14 12"><rect x=".5" y=".5" width="13" height="12" fill="#5a62c6" stroke="#3d3f96" /><rect x="3" y="1" width="8" height="6" fill="#f5f7fd" /></svg>
          </QuickIcon>
          <QuickIcon $x={93} $y={15} $dim><Undo /></QuickIcon>
          <QuickIcon $x={114} $y={21} $dim><Arrow c="#f0f5f7" /></QuickIcon>
          <QuickIcon $x={128} $y={15} $dim><Undo flip /></QuickIcon>
          <QuickIcon $x={151} $y={21} $dim><Arrow c="#f0f5f7" /></QuickIcon>
          <QuickIcon $x={176} $y={18}>
            <svg width="8" height="9" viewBox="0 0 8 9"><path d="M0 0H8V3H0ZM0 3.500H8L4 9Z" fill="#e5eefb" /><path d="M1 1.500H7M1 4.500H7L4 7.500Z" fill="#143d91" stroke="#143d91" /></svg>
          </QuickIcon>
          <QuickIcon $x={5} $y={12}><OfficeOrb /></QuickIcon>
          <FloatingTip $x={18} $y={24}>F</FloatingTip>
          <FloatingTip $x={63} $y={22}>1</FloatingTip>
          <FloatingTip $x={95} $y={22} $faded>2</FloatingTip>
          <FloatingTip $x={132} $y={22} $faded>3</FloatingTip>
          <Title>flag.xlsx - Microsoft Excel</Title>
          <WindowButtons>
            <WindowButton $w={35} $drop={9}>
              <svg width="17" height="6" viewBox="0 0 17 6"><rect x=".5" y="1.500" width="16" height="4" rx=".5" fill="#fff" stroke="#4a545e" /></svg>
            </WindowButton>
            <WindowButton $w={33}>
              <svg width="18" height="14" viewBox="0 0 18 14"><path d="M.5.500H17.500V13.500H.5ZM5 4.500V9.500H13V4.500Z" fill="#fff" fillRule="evenodd" stroke="#4a545e" /></svg>
            </WindowButton>
            <WindowButton $w={58} $close $drop={3}>
              <svg width="16" height="14" viewBox="0 0 16 13"><path d="M.5.500H5L8 4L11 .5H15.500L10.500 6.500L15.500 12.500H11L8 9L5 12.500H.5L5.500 6.500Z" fill="#fff" stroke="#5b4a4c" /></svg>
            </WindowButton>
          </WindowButtons>
        </TitleBar>
        <Client>
          <Tabs>
            {tabs.map(([name, key], i) => (
              <Tab key={key} $active={i === 0}>{name}<TabTip $inset={i === 0}>{key}</TabTip></Tab>
            ))}
            <DocButtons>
              <svg width="14" height="14" viewBox="0 0 14 14"><circle cx="7" cy="7" r="6.500" fill="#fff" stroke="#5a7fb5" /><circle cx="7" cy="7" r="5" fill="#2458cf" /><text x="4.300" y="10.800" fontFamily="Liberation Sans, sans-serif" fontWeight="700" fontSize="10" fill="#fff">?</text></svg>
              <svg width="8" height="10" viewBox="0 0 8 10"><path d="M0 8.500H7" stroke="#6a7889" strokeWidth="2" /></svg>
              <svg width="9" height="8" viewBox="0 0 9 8"><path d="M1.500 2V.5H8.500V4.500H7M0 2.500H6.500V6.500H.5V2M0 3.300H7M1 1.200H9" fill="none" stroke="#6a7889" /></svg>
              <svg width="9" height="9" viewBox="0 0 9 9"><path d="M1 1L8 8M8 1L1 8" stroke="#6a7889" strokeWidth="2" /></svg>
            </DocButtons>
          </Tabs>
          <Ribbon>
            <Group $w={84}>
              <GroupBody $row $pad="0">
                <BigButton $w={55} $top={8}>
                  <PasteIcon />
                  <BigLabel $top={8}>粘贴</BigLabel>
                  <BigLabel $top={9}><Arrow /></BigLabel>
                </BigButton>
                <SmallIcons $pad="7px 0 0 3px" $gap={11}><Cut /><Copy /><Brush /></SmallIcons>
              </GroupBody>
              <GroupLabel $launch>剪贴板<Launcher /></GroupLabel>
            </Group>
            <Group $w={267}>
              <GroupBody $pad="13px 3px 0" $gap={11}>
                <Line $h={30} $gap={0}>
                  <Combo $w={147}>等线<Arrow /></Combo>
                  <Combo $w={56}><Latin>11</Latin><Arrow /></Combo>
                  <SizeButtons>
                    <ButtonSet><ToolButton $w={26} $sep><SizeA up /></ToolButton><ToolButton $w={25}><SizeA /></ToolButton></ButtonSet>
                  </SizeButtons>
                </Line>
                <Line>
                  <ButtonSet>
                    <ToolButton $w={26} $sep><Glyph>B</Glyph></ToolButton>
                    <ToolButton $w={28} $sep><Glyph $italic>I</Glyph></ToolButton>
                    <ToolButton $w={38}><WithArrow $gap={12}><Glyph $under>U</Glyph><Arrow /></WithArrow></ToolButton>
                  </ButtonSet>
                  <ButtonSet><ToolButton $w={38}><Borders /><Arrow /></ToolButton></ButtonSet>
                  <ButtonSet>
                    <ToolButton $w={38} $sep><Fill /><Arrow /></ToolButton>
                    <ToolButton $w={37}><FontColor /><Arrow /></ToolButton>
                  </ButtonSet>
                  <ButtonSet><ToolButton $w={38}><Wen /><Arrow /></ToolButton></ButtonSet>
                </Line>
              </GroupBody>
              <GroupLabel $launch>字体<Launcher /></GroupLabel>
            </Group>
            <Group $w={190}>
              <GroupBody $row $pad="14px 3px 0">
                <Stack $gap={13}>
                  <Line>
                    <ButtonSet>
                      <ToolButton $w={26} $sep><Lines kind="v" dy={-4} /></ToolButton>
                      <ToolButton $w={27} $sep><Lines kind="v" /></ToolButton>
                      <ToolButton $w={26} $on><Lines kind="v" dy={3} /></ToolButton>
                    </ButtonSet>
                    <ButtonSet><ToolButton $w={35}><Orient /><Arrow /></ToolButton></ButtonSet>
                  </Line>
                  <Line>
                    <ButtonSet>
                      <ToolButton $w={26} $sep><Lines kind="l" /></ToolButton>
                      <ToolButton $w={27} $sep><Lines kind="c" /></ToolButton>
                      <ToolButton $w={26}><Lines kind="r" /></ToolButton>
                    </ButtonSet>
                    <ButtonSet>
                      <ToolButton $w={26} $sep><Indent /></ToolButton>
                      <ToolButton $w={25}><Indent inward /></ToolButton>
                    </ButtonSet>
                  </Line>
                </Stack>
                <Columns>
                  <SideRule><VLine as="div" $h={56} /></SideRule>
                  <AlignSide>
                    <Wrap />
                    <WithArrow $gap={7}><Merge /><Arrow /></WithArrow>
                  </AlignSide>
                </Columns>
              </GroupBody>
              <GroupLabel $launch>对齐方式<Launcher /></GroupLabel>
            </Group>
            <Group $w={157}>
              <GroupBody $pad="13px 3px 0" $gap={11}>
                <Combo $w={149}>自定义<Arrow /></Combo>
                <Line>
                  <ButtonSet>
                    <ToolButton $w={38} $sep><Money /><Arrow /></ToolButton>
                    <ToolButton $w={28} $sep><Percent>%</Percent></ToolButton>
                    <ToolButton $w={26}><Glyph $size={17}>,</Glyph></ToolButton>
                  </ButtonSet>
                  <ButtonSet>
                    <ToolButton $w={26} $sep><Decimals /></ToolButton>
                    <ToolButton $w={25}><Decimals less /></ToolButton>
                  </ButtonSet>
                </Line>
              </GroupBody>
              <GroupLabel $launch>数字<Launcher /></GroupLabel>
            </Group>
            <Group $w={139}>
              <GroupBody $pad="1px 0 0 8px">
                <MenuItem><TableIcon kind="cond" />条件格式<Arrow /></MenuItem>
                <MenuItem><TableIcon kind="fmt" />套用表格格式<Arrow /></MenuItem>
                <MenuItem><TableIcon kind="cell" />单元格样式<Arrow /></MenuItem>
              </GroupBody>
              <GroupLabel>样式</GroupLabel>
            </Group>
            <Group $w={79}>
              <GroupBody $pad="1px 0 0 8px">
                <MenuItem><CellsIcon kind="ins" />插入<Arrow /></MenuItem>
                <MenuItem><CellsIcon kind="del" />删除<Arrow /></MenuItem>
                <MenuItem><CellsIcon kind="fmt" />格式<Arrow /></MenuItem>
              </GroupBody>
              <GroupLabel>单元格</GroupLabel>
            </Group>
            <Group $w={145}>
              <GroupBody $row $pad="0">
                <SmallIcons $pad="4px 0 0 9px" $gap={8}>
                  <WithArrow $gap={10}><Glyph $size={16}>Σ</Glyph><Arrow /></WithArrow>
                  <WithArrow $gap={6}><FillDown /><Arrow /></WithArrow>
                  <WithArrow $gap={5}><Eraser /><Arrow /></WithArrow>
                </SmallIcons>
                <BigButton $w={59} $top={9}>
                  <SortIcon />
                  <BigLabel $top={8}>
                    <span>排序和</span>
                    <WithArrow>筛选<Arrow /></WithArrow>
                  </BigLabel>
                </BigButton>
                <BigButton $w={41} $top={10}>
                  <Binoculars />
                  <BigLabel $top={11}>
                    <span>查找和</span>
                    <WithArrow>选择<Arrow /></WithArrow>
                  </BigLabel>
                </BigButton>
              </GroupBody>
              <GroupLabel>编辑</GroupLabel>
            </Group>
          </Ribbon>
          <FormulaBar>
            <NameBox>A2<svg width="9" height="5" viewBox="0 0 9 5"><path d="M0 0H9L4.500 5Z" fill="#000" /></svg></NameBox>
            <FxPill><Knob /><Fx>f<small>x</small></Fx></FxPill>
            <FormulaInput>1</FormulaInput>
            <Expand>
              <svg width="10" height="12" viewBox="0 0 10 12"><path d="M1 1L5 5L9 1M1 6L5 10L9 6" fill="none" stroke="#000" strokeWidth="2" /></svg>
            </Expand>
          </FormulaBar>
          <Sheet>
            <Grid>
              <GridRow $h={15}>
                <Corner><svg width="8" height="8" viewBox="0 0 8 8"><path d="M8 0V8H0Z" fill="#e4ecf7" /></svg></Corner>
                {cols.map((c) => <ColHead key={c} $on={c === "A"}>{c}</ColHead>)}
                <ColHead />
              </GridRow>
              {Array.from({ length: 16 }, (_, r) => (
                <GridRow key={r} $h={r === 0 ? 33 : 18}>
                  <RowHead $on={r === 1}>{r + 1}</RowHead>
                  {r === 0 && <WideCell>我看见<SerifRun>flag</SerifRun>了，你呢？</WideCell>}
                  {Array.from({ length: r === 0 ? 15 : 20 }, (_, c) => <Cell key={c} />)}
                </GridRow>
              ))}
              <Selection />
            </Grid>
            <VScroll>
              <SplitHandle />
              <ScrollArrow $top={9}><svg width="11" height="6" viewBox="0 0 11 6"><path d="M5.500 0L11 6H0Z" fill="#3a4774" /></svg></ScrollArrow>
              <VThumb><VGrip /></VThumb>
              <ScrollArrow $top={160}><svg width="11" height="6" viewBox="0 0 11 6"><path d="M0 0H11L5.500 6Z" fill="#3a4774" /></svg></ScrollArrow>
            </VScroll>
          </Sheet>
          <SheetBar>
            <SheetNav>
              <svg width="8" height="9" viewBox="0 0 8 9"><path d="M0 0H1.500V9H0ZM7.500 0V9L2.500 4.500Z" fill="#15428b" /></svg>
              <svg width="5" height="9" viewBox="0 0 5 9"><path d="M5 0V9L0 4.500Z" fill="#15428b" /></svg>
              <svg width="5" height="9" viewBox="0 0 5 9"><path d="M0 0V9L5 4.500Z" fill="#15428b" /></svg>
              <svg width="8" height="9" viewBox="0 0 8 9"><path d="M8 0H6.500V9H8ZM.5 0V9L5.500 4.500Z" fill="#15428b" /></svg>
            </SheetNav>
            <SheetTab>Sheet1</SheetTab>
            <NewSheet>
              <svg width="18" height="16" viewBox="0 0 18 16">
                <path d="M4.500 4H16.500V11L13 14.500H6.500L4.500 12Z" fill="#dce6f5" stroke="#66799b" />
                <path d="M4 0V9M0 4.500H8.500M1 1.500L7.500 7.500M7.500 1.500L1 7.500" stroke="#d48722" />
                <circle cx="4.200" cy="4.500" r="1.500" fill="#fff" />
              </svg>
            </NewSheet>
            <HScroll>
              <SplitBox />
              <ArrowGap><svg width="7" height="12" viewBox="0 0 7 12"><path d="M7 0V12L0 6Z" fill="#3f4f80" /></svg></ArrowGap>
              <HThumb><svg width="8" height="7" viewBox="0 0 8 7"><path d="M.5 0V7M2.500 0V7M4.500 0V7M6.500 0V7" stroke="#77859b" /></svg></HThumb>
              <svg width="7" height="12" viewBox="0 0 7 12"><path d="M0 0V12L7 6Z" fill="#3f4f80" /></svg>
              <ArrowGap><SplitBox /></ArrowGap>
            </HScroll>
          </SheetBar>
          <StatusBar>
            <StatusText>就绪</StatusText>
            <VLine $h={22} />
            <StatusRight>
              <Views>
                <View $on><svg width="16" height="13" viewBox="0 0 16 13"><rect width="16" height="13" fill="#5e5e58" /><path d="M1 2h4v2.500H1zM6 2h4v2.500H6zM11 2h4v2.500h-4zM1 5.500h4V8H1zM6 5.500h4V8H6zM11 5.500h4V8h-4zM1 9h4v3H1zM6 9h4v3H6zM11 9h4v3h-4z" fill="#fff" /></svg></View>
                <View><svg width="16" height="15" viewBox="0 0 16 15"><rect x=".5" y=".5" width="15" height="14" fill="#a2a5aa" stroke="#5f6266" /><path d="M4.500 3.500h7v8h-7z" fill="#f4f4f4" stroke="#6b6e72" /><path d="M6 6h4M6 8.500h4" stroke="#777" /></svg></View>
                <View><svg width="16" height="15" viewBox="0 0 16 15"><rect x=".5" y=".5" width="15" height="14" fill="#a2a5aa" stroke="#5f6266" /><path d="M1 1h4v8H1zM6 1h4v8H6z" fill="#f7f7f7" /><path d="M10.500 1V9M5.500 1V9" stroke="#6b6e72" /></svg></View>
              </Views>
              <Zoom>70%</Zoom>
              <svg width="190" height="24" viewBox="0 0 190 24">
                <path d="M30 13H150" stroke="#5f83ba" /><path d="M30 12H150M91.500 8V17" stroke="#dbe8fa" />
                <circle cx="17" cy="12" r="9.500" fill="#eaf1fb" stroke="#526d94" /><path d="M12.500 12H21.500" stroke="#45597a" strokeWidth="2" />
                <circle cx="164" cy="12" r="9.500" fill="#eaf1fb" stroke="#526d94" /><path d="M159 12H169M164 7V17" stroke="#45597a" strokeWidth="2.200" />
                <path d="M66.500 4.500H76.500V14L71.500 19.500L66.500 14Z" fill="#f0f5fd" stroke="#4a6288" /><path d="M71.500 8V14" stroke="#7b93b8" />
                <path d="M192 8h3v3h-3zM187 13h3v3h-3zM192 13h3v3h-3zM183 17h3v3h-3zM187 17h3v3h-3zM192 17h3v3h-3z" fill="#4c6796" />
              </svg>
            </StatusRight>
          </StatusBar>
        </Client>
      </Window>
    </>
  );
}
